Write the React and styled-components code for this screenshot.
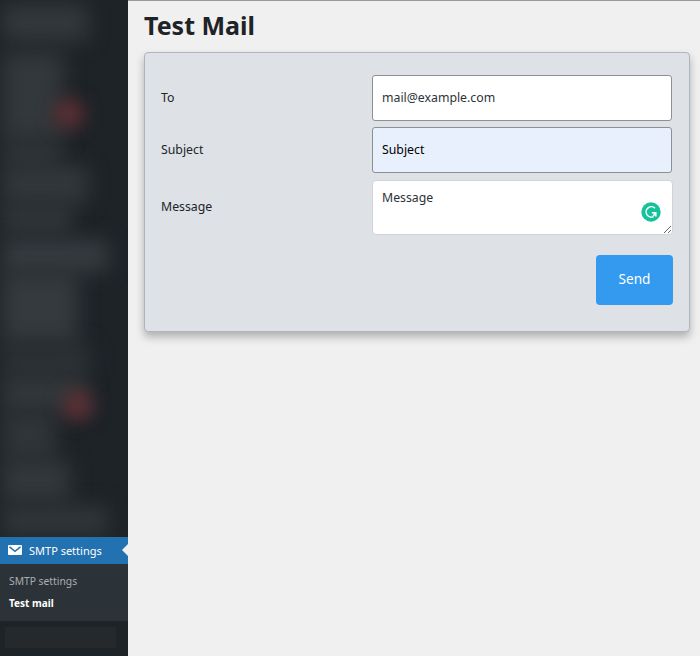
import React from 'react';
import styled, { createGlobalStyle } from 'styled-components';

const colors = {
  dark: '#1d2327',
  submenu: '#2c3338',
  blue: '#2271b1',
  page: '#f0f0f0',
  card: '#dee2e6',
  border: '#8c8f94',
  send: '#339af0',
};

const GlobalStyle = createGlobalStyle`
  body {
    margin: 0;
    background: ${colors.page};
    font-family: "Noto Sans", "Open Sans", sans-serif;
  }

  * {
    box-sizing: border-box;
  }
`;

const Page = styled.div`
  display: flex;
  height: 656px;
  overflow: hidden;
`;

const Sidebar = styled.nav`
  background: ${colors.dark};
  flex: 0 0 128px;
  overflow: hidden;
`;

const HiddenMenu = styled.div`
  height: 537px;
  overflow: hidden;
  padding-top: 4px;
`;

const HiddenItem = styled.div`
  background: ${props => props.$color || '#32383b'};
  filter: blur(10px);
  height: ${props => props.$height}px;
  margin-bottom: ${props => props.$gap || 0}px;
  margin-left: 2px;
  width: ${props => props.$width}px;
`;

const MenuRow = styled.div`
  position: relative;
`;

const CountBadge = styled.span`
  background: #5e2f34;
  border-radius: 50%;
  filter: blur(9px);
  height: 30px;
  left: ${props => props.$left}px;
  position: absolute;
  top: ${props => props.$top}px;
  width: 30px;
  z-index: 1;
`;

const ActiveItem = styled.a`
  align-items: center;
  background: ${colors.blue};
  color: #fff;
  display: flex;
  font-size: 11px;
  gap: 7px;
  height: 27px;
  padding: 0 0 1px 8px;
  position: relative;
  white-space: nowrap;

  &::after {
    border: 6.5px solid transparent;
    border-left-width: 0;
    border-right-color: ${colors.page};
    content: "";
    position: absolute;
    right: 0;
    top: 7px;
  }
`;

const Submenu = styled.div`
  background: ${colors.submenu};
  display: flex;
  flex-direction: column;
  height: 57px;
  padding: 6px 9px;
`;

const SubmenuLink = styled.a`
  color: ${props => (props.$current ? '#fff' : '#a9adb1')};
  font-size: ${props => (props.$current ? 10 : 10.3)}px;
  font-weight: ${props => (props.$current ? 700 : 400)};
  line-height: 22px;
  white-space: nowrap;
`;

const Collapse = styled.div`
  background: #25292c;
  height: 21px;
  margin: 6px 0 0 5px;
  width: 111px;
`;

const Main = styled.main`
  border-top: 1px solid #999;
  flex: 1;
  padding: 7px 10px 0 16px;
`;

const Title = styled.h1`
  color: ${colors.dark};
  font-size: 25px;
  font-weight: 700;
  line-height: 34px;
  margin: 0 0 10px;
`;

const Card = styled.form`
  background: ${colors.card};
  border: 1px solid #adb5bd;
  border-radius: 4px;
  box-shadow: 0 5px 8px rgba(0, 0, 0, .27);
  display: flex;
  flex-direction: column;
  height: 280px;
  padding: 22px 16px 0;
`;

const Field = styled.label`
  align-items: center;
  color: #212529;
  display: flex;
  font-size: 12.3px;
  height: ${props => props.$height || 46}px;
  justify-content: space-between;
  margin-bottom: 6px;
`;

const FieldName = styled.span`
  padding-bottom: 2px;
`;

const Control = styled.div`
  display: flex;
  position: relative;
  width: 301px;
`;

const Input = styled.input`
  background: ${props => (props.$filled ? '#e8f0fe' : '#fff')};
  border: 1px solid ${colors.border};
  border-radius: 3px;
  color: ${props => (props.$filled ? '#000' : '#2c3338')};
  font: inherit;
  height: 46px;
  outline: 0;
  padding: 0 9px 2px;
  width: 300px;
`;

const Textarea = styled.textarea`
  background: #fff;
  border: 1px solid #ced4da;
  border-radius: 4px;
  color: #2c3338;
  font: inherit;
  height: 55px;
  line-height: 18px;
  outline: 0;
  padding: 8px 9px;
  resize: vertical;
  width: 301px;
`;

const Checker = styled.svg`
  position: absolute;
  right: 12px;
  top: 22px;
`;

const SendButton = styled.button`
  align-self: flex-end;
  background: ${colors.send};
  border: 0;
  border-radius: 4px;
  color: #fff;
  font: 13.6px "Noto Sans", sans-serif;
  height: 50px;
  margin-top: 13px;
  padding: 0 0 3px;
  width: 77px;
`;

const hiddenItems = [
  { height: 38, width: 86, gap: 10 },
  { height: 90, width: 62, badge: { left: 54, top: 47 } },
  { height: 24, width: 60, color: '#303639' },
  { height: 38, width: 86 },
  { height: 30, width: 70, color: '#303639', gap: 6 },
  { height: 32, width: 106, color: '#363c40' },
  { height: 72, width: 76, color: '#343a3d' },
  { height: 32, width: 88, color: '#2c3235' },
  { height: 36, width: 84, badge: { left: 63, top: 14 } },
  { height: 48, width: 54, color: '#2f3538' },
  { height: 42, width: 68, gap: 4 },
  { height: 30, width: 106, color: '#303639' },
];

function Sidenav() {
  return (
    <Sidebar>
      <HiddenMenu>
        {hiddenItems.map((item, i) => (
          <MenuRow key={i}>
            <HiddenItem $height={item.height} $width={item.width} $gap={item.gap} $color={item.color} />
            {item.badge && <CountBadge $left={item.badge.left} $top={item.badge.top} />}
          </MenuRow>
        ))}
      </HiddenMenu>
      <ActiveItem>
        <svg width="14" height="10" viewBox="0 0 14 10">
          <rect width="14" height="10" rx="1" fill="#fff" />
          <path d="M1.5 1.8 7 6.3l5.5-4.5" fill="none" stroke={colors.blue} strokeWidth="1.5" />
        </svg>
        SMTP settings
      </ActiveItem>
      <Submenu>
        <SubmenuLink>SMTP settings</SubmenuLink>
        <SubmenuLink $current>Test mail</SubmenuLink>
      </Submenu>
      <Collapse />
    </Sidebar>
  );
}

function TestMailForm() {
  return (
    <Card>
      <Field>
        <FieldName>To</FieldName>
        <Control><Input type="text" defaultValue="mail@example.com" /></Control>
      </Field>
      <Field>
        <FieldName>Subject</FieldName>
        <Control><Input type="text" defaultValue="Subject" $filled /></Control>
      </Field>
      <Field $height={57}>
        <FieldName>Message</FieldName>
        <Control>
          <Textarea defaultValue="Message" spellCheck={false} />
          <Checker width="20" height="20" viewBox="0 0 20 20">
            <circle cx="10" cy="10" r="9.7" fill="#15c39a" />
            <path d="M14 6.2A5.2 5.2 0 1 0 12.5 14.6" fill="none" stroke="#fff" strokeWidth="1.5" />
            <path d="M10.8 10.7h4v3.8M14.8 10.7l-2.8 3.6" fill="none" stroke="#fff" strokeWidth="1.5" />
          </Checker>
        </Control>
      </Field>
      <SendButton type="button">Send</SendButton>
    </Card>
  );
}

function App() {
  return (
    <>
      <GlobalStyle />
      <Page>
        <Sidenav />
        <Main>
          <Title>Test Mail</Title>
          <TestMailForm />
        </Main>
      </Page>
    </>
  );
}

export default App;
